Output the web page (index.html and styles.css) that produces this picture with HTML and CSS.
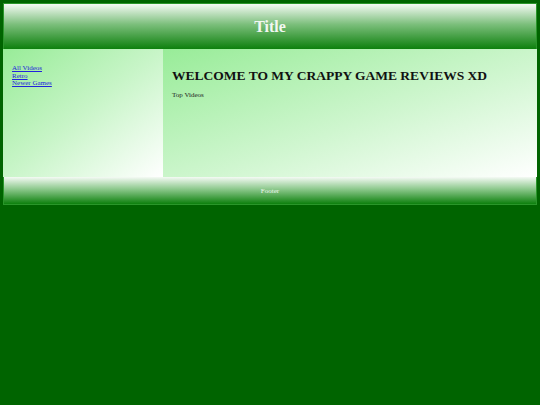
FILE: index.html
```html
<!DOCTYPE html>
<html>
<head>
<meta charset="utf-8">
<link rel="stylesheet" href="styles.css">
</head>
<body>
<div class="page">
  <header class="header"><h1 class="title">Title</h1></header>
  <div class="middle">
    <nav class="sidebar">
      <a href="#">All Videos</a>
      <a href="#">Retro</a>
      <a href="#">Newer Games</a>
    </nav>
    <main class="main">
      <h2 class="welcome">WELCOME TO MY CRAPPY GAME REVIEWS XD</h2>
      <p class="top">Top Videos</p>
    </main>
  </div>
  <footer class="footer">Footer</footer>
</div>
</body>
</html>
```
FILE: styles.css
```css
html, body {
  margin: 0;
  padding: 0;
  background: #006400;
  font-family: "Liberation Serif", "Times New Roman", serif;
}
.page {
  margin: 3px;
  width: 534px;
  display: flex;
  flex-direction: column;
}
.header {
  height: 46px;
  display: flex;
  align-items: center;
  justify-content: center;
  background: linear-gradient(to bottom, #f4faf4 0%, #7cbf7c 45%, #0d800d 100%);
  border-left: 1px solid #2a962a;
  border-right: 1px solid #2a962a;
  border-top: 1px solid #2a962a;
  box-sizing: border-box;
}
.title {
  margin: 0;
  color: #f2f7f2;
  font-size: 16px;
  font-weight: bold;
}
.middle {
  display: flex;
  height: 128px;
}
.sidebar {
  width: 160px;
  box-sizing: border-box;
  padding: 16px 9px;
  display: flex;
  flex-direction: column;
  font-size: 7px;
  line-height: 7.5px;
  background: linear-gradient(to bottom right, #98ec98 0%, #c8f5c8 50%, #ffffff 100%);
}
.sidebar a {
  color: #2222dd;
}
.main {
  flex: 1;
  box-sizing: border-box;
  padding: 19px 9px;
  background: linear-gradient(to bottom right, #98ec98 0%, #cff6cf 55%, #ffffff 100%);
}
.welcome {
  margin: 0;
  font-size: 13.5px;
  font-weight: bold;
  color: #111;
  line-height: 15px;
}
.top {
  margin: 8px 0 0;
  font-size: 7px;
  line-height: 8px;
  color: #222;
}
.footer {
  height: 28px;
  display: flex;
  align-items: center;
  justify-content: center;
  font-size: 7px;
  color: #eef6ee;
  background: linear-gradient(to bottom, #f4faf4 0%, #8cc88c 45%, #0d800d 100%);
  border-left: 1px solid #2a962a;
  border-right: 1px solid #2a962a;
  border-bottom: 1px solid #2a962a;
  box-sizing: border-box;
}
```
